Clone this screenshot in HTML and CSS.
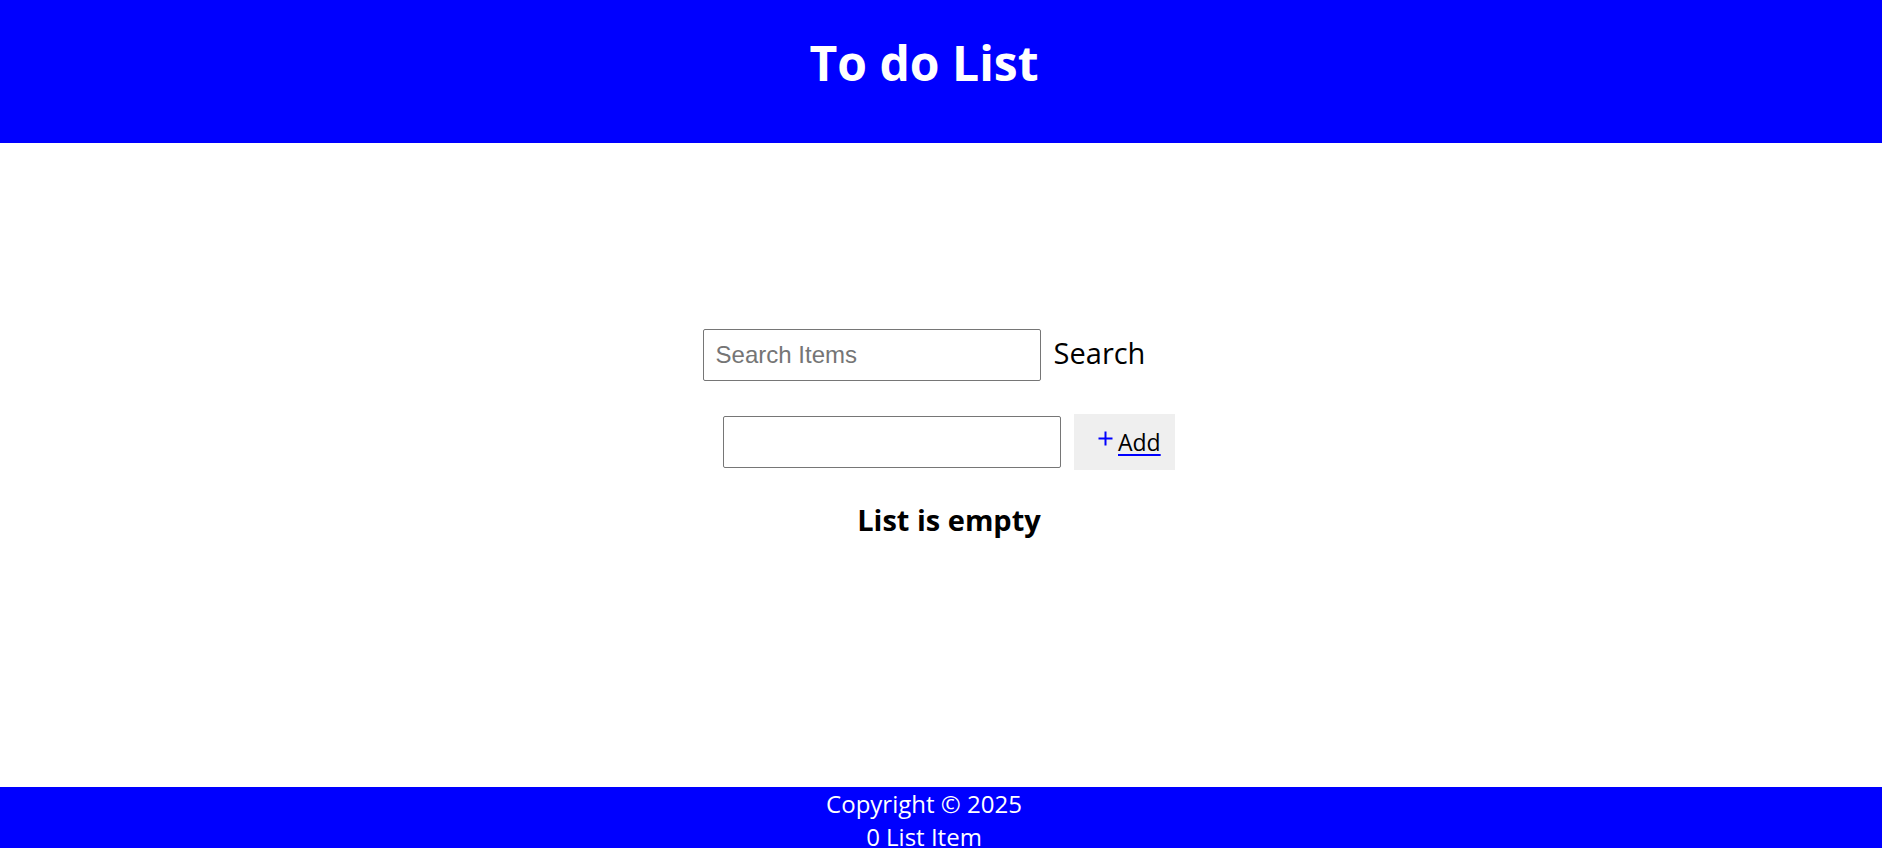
FILE: index.html
```html
<!DOCTYPE html>
<html lang="en">
<head>
<meta charset="utf-8">
<title>To do List</title>
<link rel="stylesheet" href="styles.css">
</head>
<body>
<header class="header">
  <h1 class="title">To do List</h1>
</header>
<main class="main">
  <form class="search-row">
    <input class="field" type="text" placeholder="Search Items">
    <label class="search-label">Search</label>
  </form>
  <form class="add-row">
    <input class="field" type="text">
    <button class="add-btn" type="button">
      <svg class="plus" width="15" height="15" viewBox="0 0 15 15"><path d="M7.5 0.5V14.5M0.5 7.5H14.5" stroke="#0000ff" stroke-width="2" fill="none"/></svg>
      <span class="add-text">Add</span>
    </button>
  </form>
  <h3 class="empty">List is empty</h3>
</main>
<footer class="footer">
  <p class="foot-line">Copyright © 2025</p>
  <p class="foot-line">0 List Item</p>
</footer>
</body>
</html>
```
FILE: styles.css
```css
html, body {
  margin: 0;
  padding: 0;
  background: #ffffff;
  font-family: "Open Sans", "Noto Sans", sans-serif;
}
.header {
  height: 143px;
  box-sizing: border-box;
  background: #0000ff;
  color: #ffffff;
  padding: 30px 34px 0 0;
  text-align: center;
}
.title {
  margin: 0;
  font-size: 48px;
  font-weight: 700;
  line-height: normal;
}
.main {
  height: 644px;
  box-sizing: border-box;
  padding: 186px 34px 0 0;
  display: flex;
  flex-direction: column;
  align-items: center;
}
.search-row, .add-row {
  display: flex;
  align-items: center;
  gap: 13px;
  margin: 0;
}
.add-row {
  margin-top: 33px;
  margin-left: 50px;
}
.field {
  width: 338px;
  height: 52px;
  box-sizing: border-box;
  border: 1px solid #767676;
  border-radius: 2px;
  padding: 0 12px;
  font-family: "Liberation Sans", Arial, sans-serif;
  font-size: 24px;
  color: #000;
  background: #fff;
}
.field::placeholder {
  color: #757575;
}
.search-label {
  font-size: 29px;
  color: #000;
  line-height: 1;
  margin-bottom: 5px;
}
.add-btn {
  height: 56px;
  width: 101px;
  box-sizing: border-box;
  border: none;
  background: #efefef;
  display: flex;
  align-items: center;
  gap: 5px;
  padding: 0 0 0 24px;
  font-family: inherit;
  cursor: pointer;
}
.plus {
  display: block;
  margin-top: -8px;
}
.add-text {
  font-size: 23px;
  color: #000;
  text-decoration: underline;
  text-decoration-color: #0000ff;
  text-decoration-thickness: 2px;
  text-underline-offset: 3px;
  margin-top: 0;
}
.empty {
  margin: 30px 0 0 50px;
  font-size: 29px;
  font-weight: 700;
  line-height: normal;
}
.footer {
  background: #0000ff;
  color: #ffffff;
  text-align: center;
  padding-right: 34px;
  font-size: 24px;
}
.foot-line {
  margin: 0;
  line-height: 33px;
}
```
